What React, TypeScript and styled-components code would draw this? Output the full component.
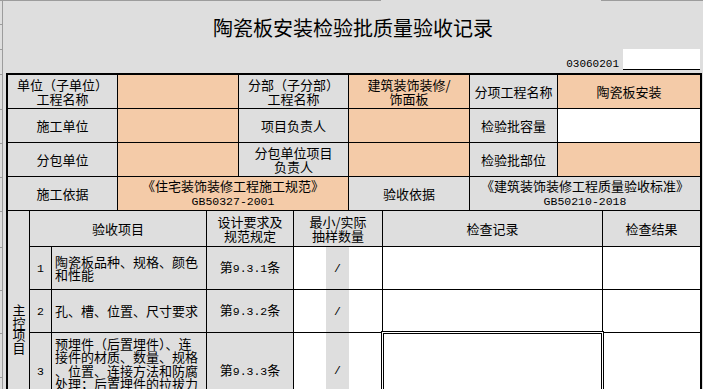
import React from "react";
import styled, { createGlobalStyle } from "styled-components";

const GRAY = "#dedede";
const ORANGE = "#f4cba8";
const RULE = "#9c9c9c";

const GlobalStyle = createGlobalStyle`
  html, body { margin: 0; padding: 0; background: ${GRAY}; }
  body { font-family: "Noto Sans CJK SC", "Noto Sans", sans-serif; color: #000; }
`;

const Page = styled.div`
  width: 703px;
  height: 389px;
  overflow: hidden;
  display: flex;
  flex-direction: column;
  background: ${GRAY};
`;

const TopRule = styled.div`
  display: flex;
  height: 1px;
  flex: none;
`;

const RuleSeg = styled.div<{ $w?: number }>`
  height: 1px;
  background: ${RULE};
  ${(p) => (p.$w ? `width:${p.$w}px; flex:none;` : "flex:1;")}
`;

const RuleGap = styled.div`
  width: 220px;
  flex: none;
`;

const Body = styled.div`
  display: flex;
  flex: 1;
  min-height: 0;
`;

const Gutter = styled.div`
  width: 2px;
  flex: none;
  border-right: 1px solid ${RULE};
  display: flex;
  flex-direction: column;
`;

const Tick = styled.div<{ $h: number }>`
  height: ${(p) => p.$h}px;
  flex: none;
  box-sizing: border-box;
  border-bottom: 1px solid ${RULE};
`;

const Main = styled.div`
  flex: 1;
  display: flex;
  flex-direction: column;
  min-width: 0;
`;

const Title = styled.h1`
  margin: 0;
  height: 48px;
  box-sizing: border-box;
  padding-top: 5px;
  line-height: 43px;
  font-size: 20px;
  font-weight: 400;
  text-align: center;
  white-space: nowrap;
`;

const CodeRow = styled.div`
  height: 25px;
  box-sizing: border-box;
  padding: 0 3px 3px 0;
  display: flex;
  justify-content: flex-end;
  align-items: flex-end;
`;

const CodeText = styled.span`
  font-family: "Liberation Mono", monospace;
  font-size: 11px;
  line-height: 12px;
  margin-right: 4px;
`;

const CodeBox = styled.div`
  width: 77px;
  height: 21px;
  box-sizing: border-box;
  background: #fff;
  border-bottom: 1px solid #000;
`;

const Sheet = styled.div`
  margin-left: 3px;
  width: 692px;
  border: 2px solid #000;
  background: #000;
  display: flex;
  flex-direction: column;
  gap: 1px;
  flex: none;
`;

const UpperGrid = styled.div`
  display: grid;
  grid-template-columns: 109px 120px 109px 120px 87px 142px;
  grid-template-rows: repeat(4, 33px);
  gap: 1px;
`;

const LowerGrid = styled.div`
  display: grid;
  grid-template-columns: 21px 21px 154px 86px 88px 219px 97px;
  grid-template-rows: 35px 42px 42px 75px 38px;
  gap: 1px;
`;

type Tone = "gray" | "orange" | "white";

const toneBg = (t: Tone) => (t === "orange" ? ORANGE : t === "white" ? "#fff" : GRAY);

const CellBox = styled.div<{ $tone?: Tone; $cols?: number; $rows?: number; $left?: boolean }>`
  background: ${(p) => toneBg(p.$tone || "gray")};
  ${(p) => (p.$cols ? `grid-column: span ${p.$cols};` : "")}
  ${(p) => (p.$rows ? `grid-row: span ${p.$rows};` : "")}
  display: flex;
  align-items: center;
  justify-content: ${(p) => (p.$left ? "flex-start" : "center")};
  padding: ${(p) => (p.$left ? "0 3px" : "0")};
  overflow: hidden;
  min-width: 0;
`;

const CellText = styled.div<{ $left?: boolean }>`
  width: 100%;
  text-align: ${(p) => (p.$left ? "left" : "center")};
  font-size: 13px;
  line-height: 13.4px;
  line-break: anywhere;
  word-break: break-all;
`;

type CellProps = {
  tone?: Tone;
  cols?: number;
  rows?: number;
  left?: boolean;
  children?: React.ReactNode;
};

function Cell({ tone, cols, rows, left, children }: CellProps) {
  return (
    <CellBox $tone={tone} $cols={cols} $rows={rows} $left={left}>
      {children !== undefined && <CellText $left={left}>{children}</CellText>}
    </CellBox>
  );
}

const Latin = styled.span`
  font-family: "Liberation Mono", monospace;
  font-size: 11.5px;
`;

const VerticalLabel = styled.span`
  writing-mode: vertical-rl;
  text-orientation: upright;
  letter-spacing: -0.5px;
  font-size: 13px;
  line-height: 14px;
`;

const SampleCell = styled.div`
  background: #fff;
  display: grid;
  grid-template-columns: 32px 23px 1fr;
`;

const SampleBand = styled.div`
  background: ${GRAY};
  display: flex;
  align-items: center;
  justify-content: center;
  font-family: "Liberation Mono", monospace;
  font-size: 11.5px;
`;

const RecordCell = styled.div<{ $selected?: boolean }>`
  background: #fff;
  ${(p) =>
    p.$selected
      ? `position: relative;
         z-index: 1;
         margin: -2px;
         border: 1px solid #000;
         box-shadow: inset 0 0 0 1px #fff, inset 0 0 0 2px #000;`
      : ""}
`;

const ticks = [24, 25, 25, 35, 34, 34, 34, 36, 43, 43, 44];

type Item = { no: string; text: string; clause: string };

const items: Item[] = [
  { no: "1", text: "陶瓷板品种、规格、颜色和性能", clause: "9.3.1" },
  { no: "2", text: "孔、槽、位置、尺寸要求", clause: "9.3.2" },
  {
    no: "3",
    text: "预埋件（后置埋件）、连接件的材质、数量、规格、位置、连接方法和防腐处理；后置埋件的拉拔力应符合设计要求",
    clause: "9.3.3",
  },
  { no: "4", text: "陶瓷板安装必须牢固", clause: "9.3.4" },
];

export default function App() {
  return (
    <>
      <GlobalStyle />
      <Page>
        <TopRule>
          <RuleSeg $w={381} />
          <RuleGap />
          <RuleSeg />
        </TopRule>
        <Body>
          <Gutter>
            {ticks.map((h, i) => (
              <Tick key={i} $h={h} />
            ))}
          </Gutter>
          <Main>
            <Title>陶瓷板安装检验批质量验收记录</Title>
            <CodeRow>
              <CodeText>03060201</CodeText>
              <CodeBox />
            </CodeRow>
            <Sheet>
              <UpperGrid>
                <Cell>
                  单位（子单位）
                  <br />
                  工程名称
                </Cell>
                <Cell tone="orange" />
                <Cell>
                  分部（子分部）
                  <br />
                  工程名称
                </Cell>
                <Cell tone="orange">
                  建筑装饰装修/
                  <br />
                  饰面板
                </Cell>
                <Cell>分项工程名称</Cell>
                <Cell tone="orange">陶瓷板安装</Cell>

                <Cell>施工单位</Cell>
                <Cell tone="orange" />
                <Cell>项目负责人</Cell>
                <Cell tone="orange" />
                <Cell>检验批容量</Cell>
                <Cell tone="white" />

                <Cell>分包单位</Cell>
                <Cell tone="orange" />
                <Cell>
                  分包单位项目
                  <br />
                  负责人
                </Cell>
                <Cell tone="orange" />
                <Cell>检验批部位</Cell>
                <Cell tone="orange" />

                <Cell>施工依据</Cell>
                <Cell tone="orange" cols={2}>
                  《住宅装饰装修工程施工规范》
                  <br />
                  <Latin>GB50327-2001</Latin>
                </Cell>
                <Cell>验收依据</Cell>
                <Cell cols={2}>
                  《建筑装饰装修工程质量验收标准》
                  <br />
                  <Latin>GB50210-2018</Latin>
                </Cell>
              </UpperGrid>

              <LowerGrid>
                <CellBox $rows={5}>
                  <VerticalLabel>主控项目</VerticalLabel>
                </CellBox>
                <Cell cols={2}>验收项目</Cell>
                <Cell>
                  设计要求及
                  <br />
                  规范规定
                </Cell>
                <Cell>
                  最小/实际
                  <br />
                  抽样数量
                </Cell>
                <Cell>检查记录</Cell>
                <Cell>检查结果</Cell>

                {items.map((it) => (
                  <React.Fragment key={it.no}>
                    <Cell>
                      <Latin>{it.no}</Latin>
                    </Cell>
                    <Cell left>{it.text}</Cell>
                    <Cell>
                      第<Latin>{it.clause}</Latin>条
                    </Cell>
                    <SampleCell>
                      <span />
                      <SampleBand>/</SampleBand>
                      <span />
                    </SampleCell>
                    <RecordCell $selected={it.no === "3"} />
                    <RecordCell />
                  </React.Fragment>
                ))}
              </LowerGrid>
            </Sheet>
          </Main>
        </Body>
      </Page>
    </>
  );
}
